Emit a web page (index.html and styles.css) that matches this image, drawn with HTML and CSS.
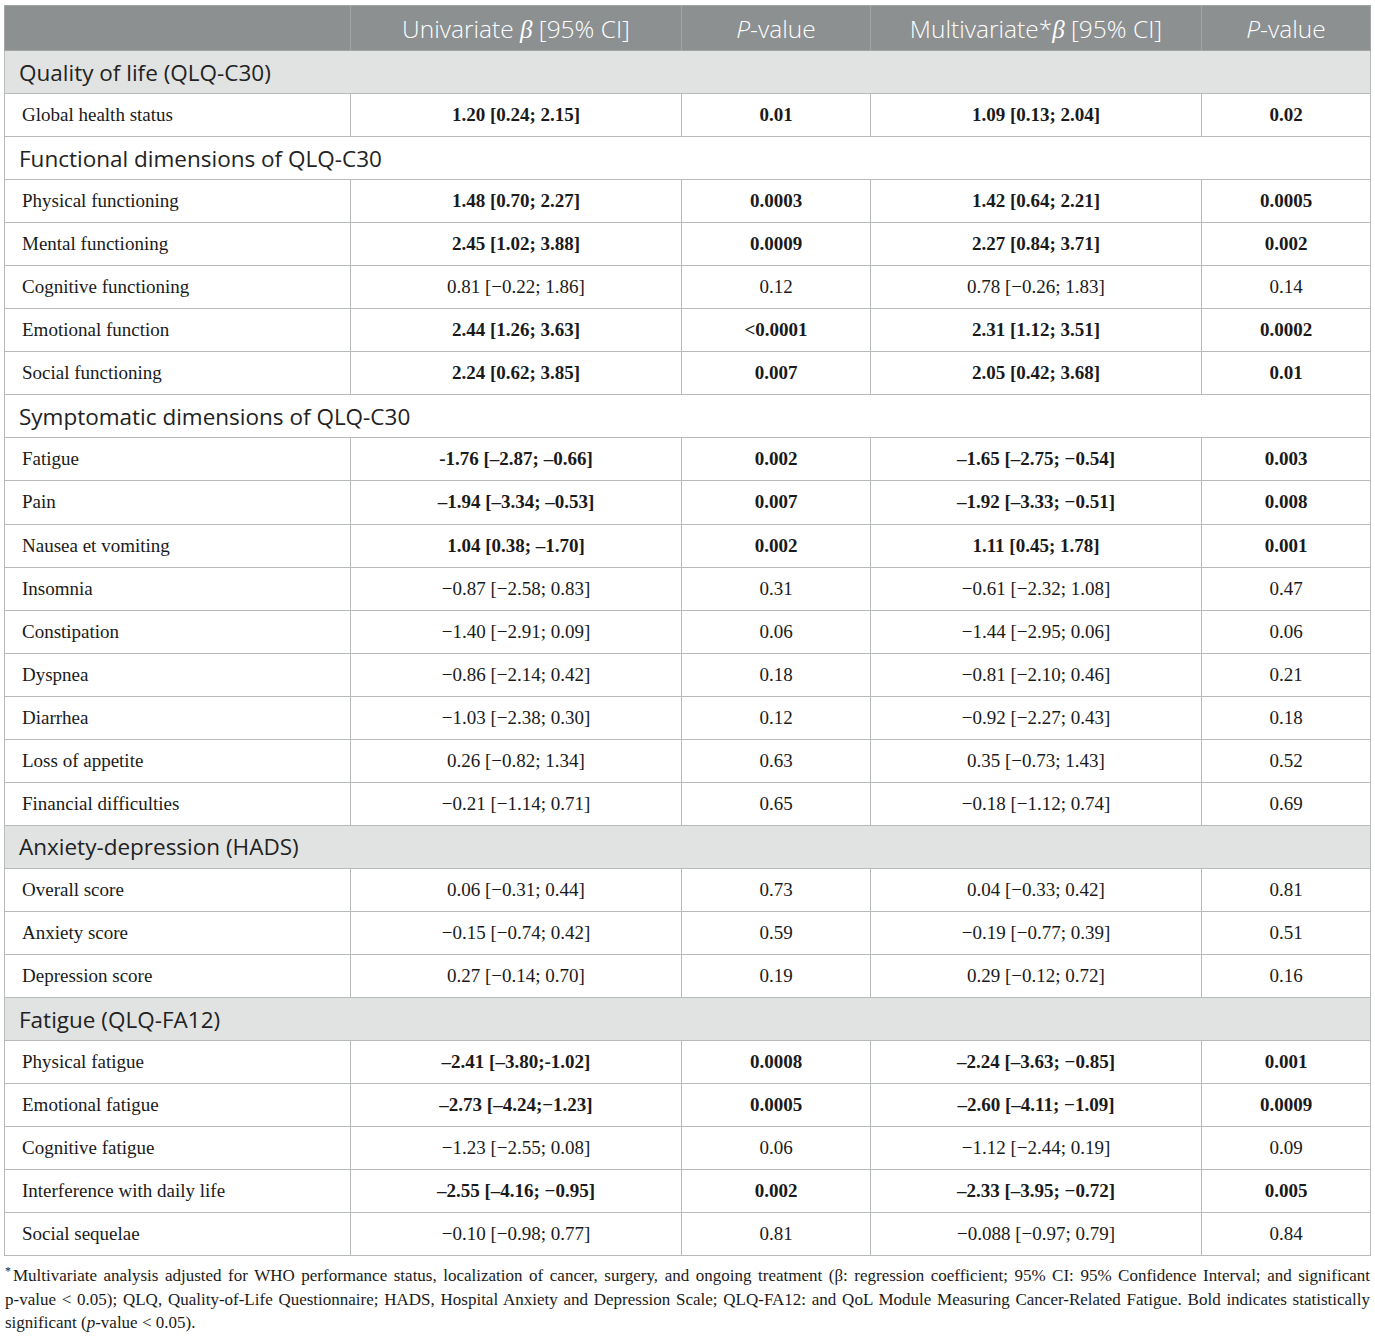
FILE: index.html
```html
<!DOCTYPE html>
<html>
<head>
<meta charset="utf-8">
<link rel="stylesheet" href="styles.css">
</head>
<body>
<div class="page">
<table class="tbl">
  <colgroup>
    <col class="c1"><col class="c2"><col class="c3"><col class="c4"><col class="c5">
  </colgroup>
  <thead>
    <tr class="head">
      <th></th>
      <th>Univariate <i class="beta">β</i> [95% CI]</th>
      <th><i>P</i>-value</th>
      <th>Multivariate*<i class="beta">β</i> [95% CI]</th>
      <th><i>P</i>-value</th>
    </tr>
  </thead>
  <tbody>
    <tr class="sec gray"><td colspan="5">Quality of life (QLQ-C30)</td></tr>
    <tr><td>Global health status</td><td class="b">1.20 [0.24; 2.15]</td><td class="b">0.01</td><td class="b">1.09 [0.13; 2.04]</td><td class="b">0.02</td></tr>

    <tr class="sec"><td colspan="5">Functional dimensions of QLQ-C30</td></tr>
    <tr><td>Physical functioning</td><td class="b">1.48 [0.70; 2.27]</td><td class="b">0.0003</td><td class="b">1.42 [0.64; 2.21]</td><td class="b">0.0005</td></tr>
    <tr><td>Mental functioning</td><td class="b">2.45 [1.02; 3.88]</td><td class="b">0.0009</td><td class="b">2.27 [0.84; 3.71]</td><td class="b">0.002</td></tr>
    <tr><td>Cognitive functioning</td><td>0.81 [−0.22; 1.86]</td><td>0.12</td><td>0.78 [−0.26; 1.83]</td><td>0.14</td></tr>
    <tr><td>Emotional function</td><td class="b">2.44 [1.26; 3.63]</td><td class="b">&lt;0.0001</td><td class="b">2.31 [1.12; 3.51]</td><td class="b">0.0002</td></tr>
    <tr><td>Social functioning</td><td class="b">2.24 [0.62; 3.85]</td><td class="b">0.007</td><td class="b">2.05 [0.42; 3.68]</td><td class="b">0.01</td></tr>

    <tr class="sec"><td colspan="5">Symptomatic dimensions of QLQ-C30</td></tr>
    <tr><td>Fatigue</td><td class="b">-1.76 [–2.87; –0.66]</td><td class="b">0.002</td><td class="b">–1.65 [–2.75; −0.54]</td><td class="b">0.003</td></tr>
    <tr><td>Pain</td><td class="b">–1.94 [–3.34; –0.53]</td><td class="b">0.007</td><td class="b">–1.92 [–3.33; −0.51]</td><td class="b">0.008</td></tr>
    <tr><td>Nausea et vomiting</td><td class="b">1.04 [0.38; –1.70]</td><td class="b">0.002</td><td class="b">1.11 [0.45; 1.78]</td><td class="b">0.001</td></tr>
    <tr><td>Insomnia</td><td>−0.87 [−2.58; 0.83]</td><td>0.31</td><td>−0.61 [−2.32; 1.08]</td><td>0.47</td></tr>
    <tr><td>Constipation</td><td>−1.40 [−2.91; 0.09]</td><td>0.06</td><td>−1.44 [−2.95; 0.06]</td><td>0.06</td></tr>
    <tr><td>Dyspnea</td><td>−0.86 [−2.14; 0.42]</td><td>0.18</td><td>−0.81 [−2.10; 0.46]</td><td>0.21</td></tr>
    <tr><td>Diarrhea</td><td>−1.03 [−2.38; 0.30]</td><td>0.12</td><td>−0.92 [−2.27; 0.43]</td><td>0.18</td></tr>
    <tr><td>Loss of appetite</td><td>0.26 [−0.82; 1.34]</td><td>0.63</td><td>0.35 [−0.73; 1.43]</td><td>0.52</td></tr>
    <tr><td>Financial difficulties</td><td>−0.21 [−1.14; 0.71]</td><td>0.65</td><td>−0.18 [−1.12; 0.74]</td><td>0.69</td></tr>

    <tr class="sec gray"><td colspan="5">Anxiety-depression (HADS)</td></tr>
    <tr><td>Overall score</td><td>0.06 [−0.31; 0.44]</td><td>0.73</td><td>0.04 [−0.33; 0.42]</td><td>0.81</td></tr>
    <tr><td>Anxiety score</td><td>−0.15 [−0.74; 0.42]</td><td>0.59</td><td>−0.19 [−0.77; 0.39]</td><td>0.51</td></tr>
    <tr><td>Depression score</td><td>0.27 [−0.14; 0.70]</td><td>0.19</td><td>0.29 [−0.12; 0.72]</td><td>0.16</td></tr>

    <tr class="sec gray"><td colspan="5">Fatigue (QLQ-FA12)</td></tr>
    <tr><td>Physical fatigue</td><td class="b">–2.41 [–3.80;-1.02]</td><td class="b">0.0008</td><td class="b">–2.24 [–3.63; −0.85]</td><td class="b">0.001</td></tr>
    <tr><td>Emotional fatigue</td><td class="b">–2.73 [–4.24;−1.23]</td><td class="b">0.0005</td><td class="b">–2.60 [–4.11; −1.09]</td><td class="b">0.0009</td></tr>
    <tr><td>Cognitive fatigue</td><td>−1.23 [−2.55; 0.08]</td><td>0.06</td><td>−1.12 [−2.44; 0.19]</td><td>0.09</td></tr>
    <tr><td>Interference with daily life</td><td class="b">–2.55 [–4.16; −0.95]</td><td class="b">0.002</td><td class="b">–2.33 [–3.95; −0.72]</td><td class="b">0.005</td></tr>
    <tr><td>Social sequelae</td><td>−0.10 [−0.98; 0.77]</td><td>0.81</td><td>−0.088 [−0.97; 0.79]</td><td>0.84</td></tr>
  </tbody>
</table>
<p class="note"><sup class="star">*</sup>Multivariate analysis adjusted for WHO performance status, localization of cancer, surgery, and ongoing treatment (β: regression coefficient; 95% CI: 95% Confidence Interval; and significant <span class="nb">p-value</span> &lt; 0.05); QLQ, Quality-of-Life Questionnaire; HADS, Hospital Anxiety and Depression Scale; QLQ-FA12: and QoL Module Measuring Cancer-Related Fatigue. Bold indicates statistically significant (<i>p</i>-value &lt; 0.05).</p>
</div>
</body>
</html>
```

FILE: styles.css
```css
html, body {
  margin: 0;
  padding: 0;
  background: #ffffff;
}

.page {
  padding: 5px 5px 0 4px;
  width: 1366px;
}

.tbl {
  width: 1366px;
  border-collapse: collapse;
  table-layout: fixed;
  font-family: "Liberation Serif", "Times New Roman", serif;
  font-size: 19px;
  color: #1a1a1a;
}

.c1 { width: 346px; }
.c2 { width: 331px; }
.c3 { width: 189px; }
.c4 { width: 331px; }
.c5 { width: 169px; }

.tbl td, .tbl th {
  border: 1px solid #b8bbbb;
  padding: 0;
}

.head th {
  height: 44px;
  background: #8c9091;
  color: #ffffff;
  font-family: "Open Sans", "Noto Sans", sans-serif;
  font-weight: 300;
  font-size: 24.5px;
  text-align: center;
  border-color: #a3a6a7;
}

.head th i {
  font-style: italic;
}

.head .beta {
  font-family: "Liberation Serif", serif;
  font-weight: 400;
  font-size: 25px;
}

.tbl tbody td {
  height: 42.05px;
  text-align: center;
  vertical-align: middle;
  white-space: nowrap;
}

.tbl tbody td:first-child {
  text-align: left;
  padding-left: 17px;
}

.tbl td.b {
  font-weight: bold;
}

.tbl tr.sec td {
  text-align: left;
  padding-left: 14px;
  font-family: "Open Sans", "Noto Sans", sans-serif;
  font-size: 22.5px;
  color: #222222;
  background: #ffffff;
}

.tbl tr.sec.gray td {
  background: #e1e3e2;
}

.note {
  margin: 8px 0 0 1px;
  font-family: "Liberation Serif", "Times New Roman", serif;
  font-size: 17px;
  line-height: 23.5px;
  text-align: justify;
  color: #1a1a1a;
}

.note .nb {
  white-space: nowrap;
}

.note .star {
  font-size: 12px;
  line-height: 0;
  vertical-align: 6px;
  margin-right: 2px;
}
```
